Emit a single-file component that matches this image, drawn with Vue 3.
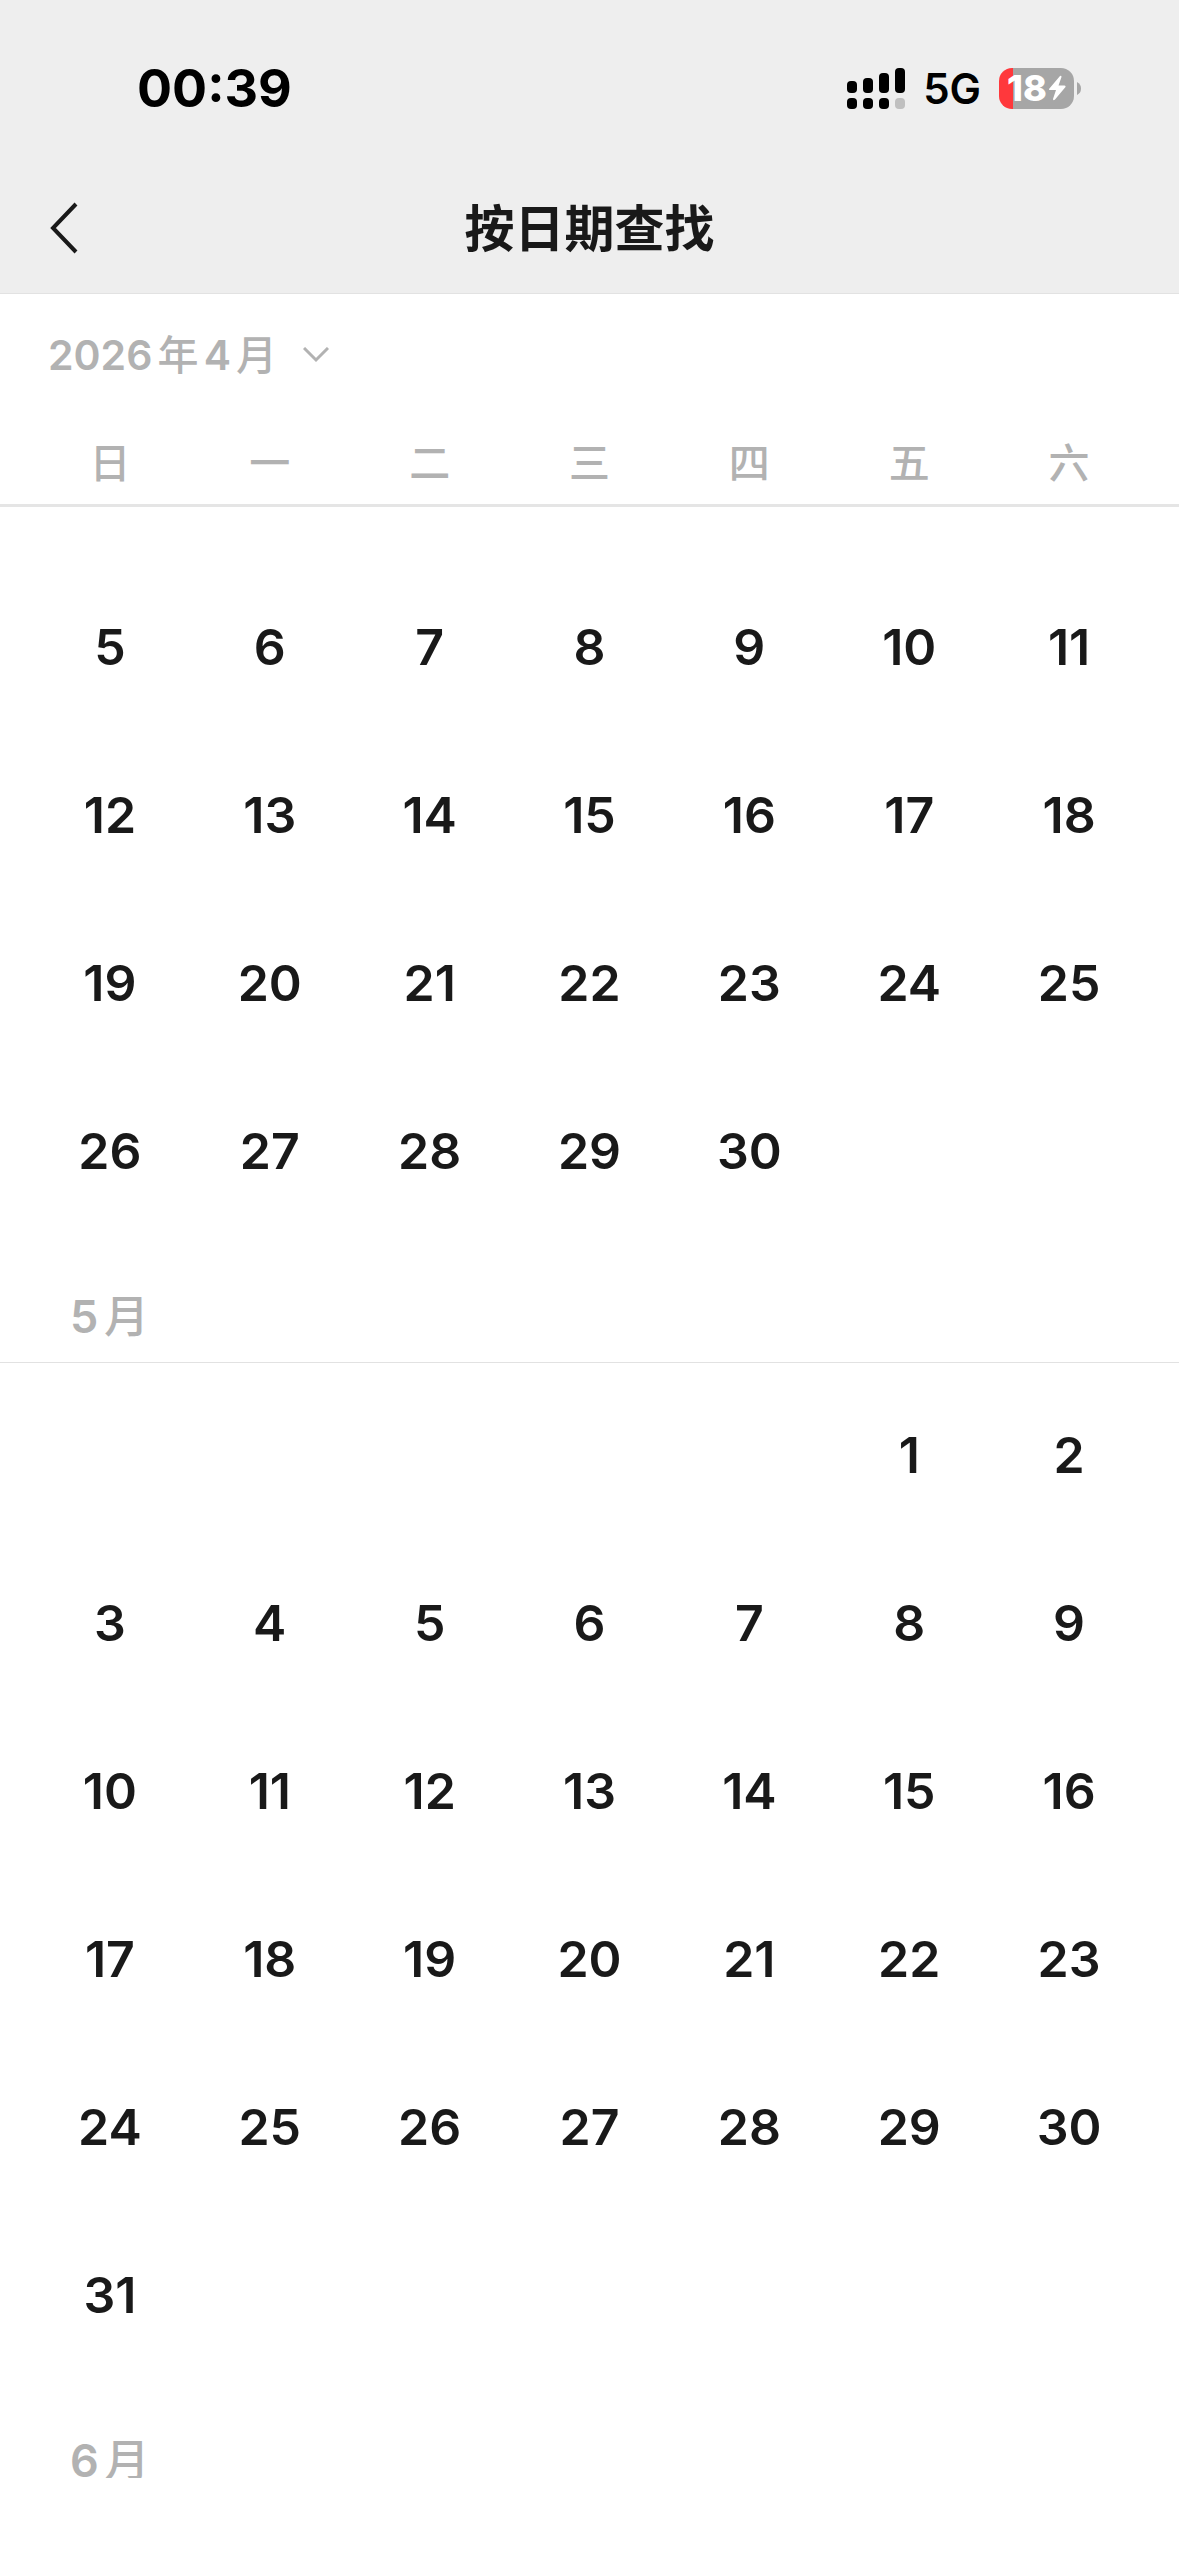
<template>
  <div class="page">
    <header class="header">
      <!-- status bar -->
      <div class="statusBar">
        <span class="time">00:39</span>
        <div class="statusIcons">
          <svg class="signal" width="58" height="41" viewBox="0 0 58 41" aria-hidden="true">
            <rect x="0" y="13" width="10" height="12" rx="4" />
            <rect x="16" y="10" width="10" height="15" rx="4" />
            <rect x="32" y="5" width="10" height="20" rx="4" />
            <rect x="48" y="0" width="10" height="25" rx="4" />
            <rect x="0" y="30" width="10" height="11" rx="4" />
            <rect x="16" y="30" width="10" height="11" rx="4" />
            <rect x="32" y="30" width="10" height="11" rx="4" />
            <rect x="48" y="30" width="10" height="11" rx="4" fill="#bfbfbf" />
          </svg>
          <span class="network">5G</span>
          <div class="battery">
            <div class="batteryBody">
              <span class="batteryLevel">18</span>
              <svg width="18" height="26" viewBox="0 0 18 26" aria-hidden="true">
                <path
                  d="M12 1 L1 14 Q0.5 15 2 15 H8 L5 24 Q5 26 7 24.500 L17.500 12 Q18 10.500 16.500 10.500 H10.500 L13.500 2 Q13.500 0 12 1 Z"
                  fill="#fff"
                />
              </svg>
            </div>
            <svg width="4" height="13" viewBox="0 0 4 13" aria-hidden="true">
              <path d="M0 0 Q4 2 4 6.500 Q4 11 0 13 Z" fill="#a6a6a6" />
            </svg>
          </div>
        </div>
      </div>

      <!-- title -->
      <div class="navBar">
        <button class="backButton" type="button" aria-label="返回">
          <svg width="28" height="52" viewBox="0 0 28 52" aria-hidden="true">
            <path d="M26 2 L3 26 L26 50" fill="none" stroke="#191919" stroke-width="4" />
          </svg>
        </button>
        <h1 class="title">按日期查找</h1>
      </div>
    </header>

    <button class="monthPicker" type="button">
      <span><b>2026</b>年<b>4</b>月</span>
      <svg width="26" height="16" viewBox="0 0 26 16" aria-hidden="true">
        <path d="M1 1 L13 13 L25 1" fill="none" stroke="#b2b2b2" stroke-width="3" />
      </svg>
    </button>

    <div class="weekdays">
      <span v-for="day in weekdays" :key="day">{{ day }}</span>
    </div>

    <!-- months -->
    <main class="months">
      <section v-for="month in months" :key="month.number" class="month">
        <h2 v-if="month.first === 1" class="monthTitle"><b>{{ month.number }}</b>月</h2>
        <div v-if="month.last" class="days">
          <span v-for="n in month.offset" :key="'empty' + n"></span>
          <button v-for="day in getDays(month)" :key="day" class="day" type="button">{{ day }}</button>
        </div>
      </section>
    </main>
  </div>
</template>

<script setup>
import { ref } from "vue";

const weekdays = ["日", "一", "二", "三", "四", "五", "六"];

// offset is the number of empty cells before the first day,
// a month without last has no days loaded yet
const months = ref([
  { number: 4, first: 5, last: 30, offset: 0 },
  { number: 5, first: 1, last: 31, offset: 5 },
  { number: 6, first: 1, last: 0, offset: 1 },
]);

function getDays(month) {
  const days = [];
  for (let day = month.first; day <= month.last; day++) {
    days.push(day);
  }
  return days;
}
</script>

<style>
body {
  margin: 0;
  background: #fff;
}
</style>

<style scoped>
.page {
  display: flex;
  flex-direction: column;
  height: 100vh;
  box-sizing: border-box;
  padding-bottom: 78px;
  color: #191919;
  font-family: Inter, "Noto Sans CJK SC", sans-serif;
  text-autospace: normal;
}

button {
  padding: 0;
  border: 0;
  background: none;
  color: inherit;
  font: inherit;
  cursor: pointer;
}

b {
  font-weight: 600;
}

svg {
  display: block;
}

.header {
  flex: none;
  background: #eee;
  border-bottom: 1px solid #e2e2e2;
}

.statusBar {
  display: flex;
  align-items: center;
  justify-content: space-between;
  height: 162px;
  box-sizing: border-box;
  padding: 14px 98px 0 137px;
  color: #000;
}

.time {
  font-size: 52px;
  font-weight: 700;
}

.statusIcons {
  display: flex;
  align-items: center;
  gap: 18px;
}

.network {
  font-size: 42px;
  font-weight: 600;
}

.battery {
  display: flex;
  align-items: center;
  gap: 3px;
}

.batteryBody {
  display: flex;
  align-items: center;
  justify-content: center;
  gap: 1px;
  width: 75px;
  height: 41px;
  border-radius: 13px;
  background: linear-gradient(to right, #ff383c 18%, #a6a6a6 18%);
}

.batteryLevel {
  color: #fff;
  font-size: 36px;
  font-weight: 800;
  line-height: 41px;
}

.navBar {
  display: grid;
  grid-template-columns: 1fr auto 1fr;
  align-items: center;
  height: 131px;
  padding: 0 50px;
}

.backButton {
  justify-self: start;
}

.title {
  margin: 0;
  padding-top: 2px;
  font-size: 50px;
  font-weight: 700;
  line-height: 72px;
}

.monthPicker {
  display: flex;
  flex: none;
  align-items: center;
  align-self: flex-start;
  gap: 26px;
  height: 122px;
  margin-left: 48px;
  color: #b2b2b2;
  font-size: 41px;
  font-weight: 500;
  line-height: 48px;
}

.weekdays {
  display: grid;
  flex: none;
  grid-template-columns: repeat(7, 1fr);
  margin-top: 6px;
  padding: 0 30px;
  border-bottom: 3px solid #e5e5e5;
  color: #b2b2b2;
  font-size: 41px;
  font-weight: 500;
  line-height: 82px;
  text-align: center;
}

.months {
  flex: 1;
  min-height: 0;
  padding-top: 48px;
  overflow: hidden;
}

.monthTitle {
  margin: 0;
  padding: 36px 70px 0;
  border-bottom: 1px solid #e2e2e2;
  color: #b2b2b2;
  font-size: 45px;
  font-weight: 500;
  line-height: 91px;
}

.days {
  display: grid;
  grid-template-columns: repeat(7, 1fr);
  grid-auto-rows: 168px;
  padding: 8px 30px 0;
}

.day {
  font-size: 50px;
  font-weight: 600;
}
</style>
